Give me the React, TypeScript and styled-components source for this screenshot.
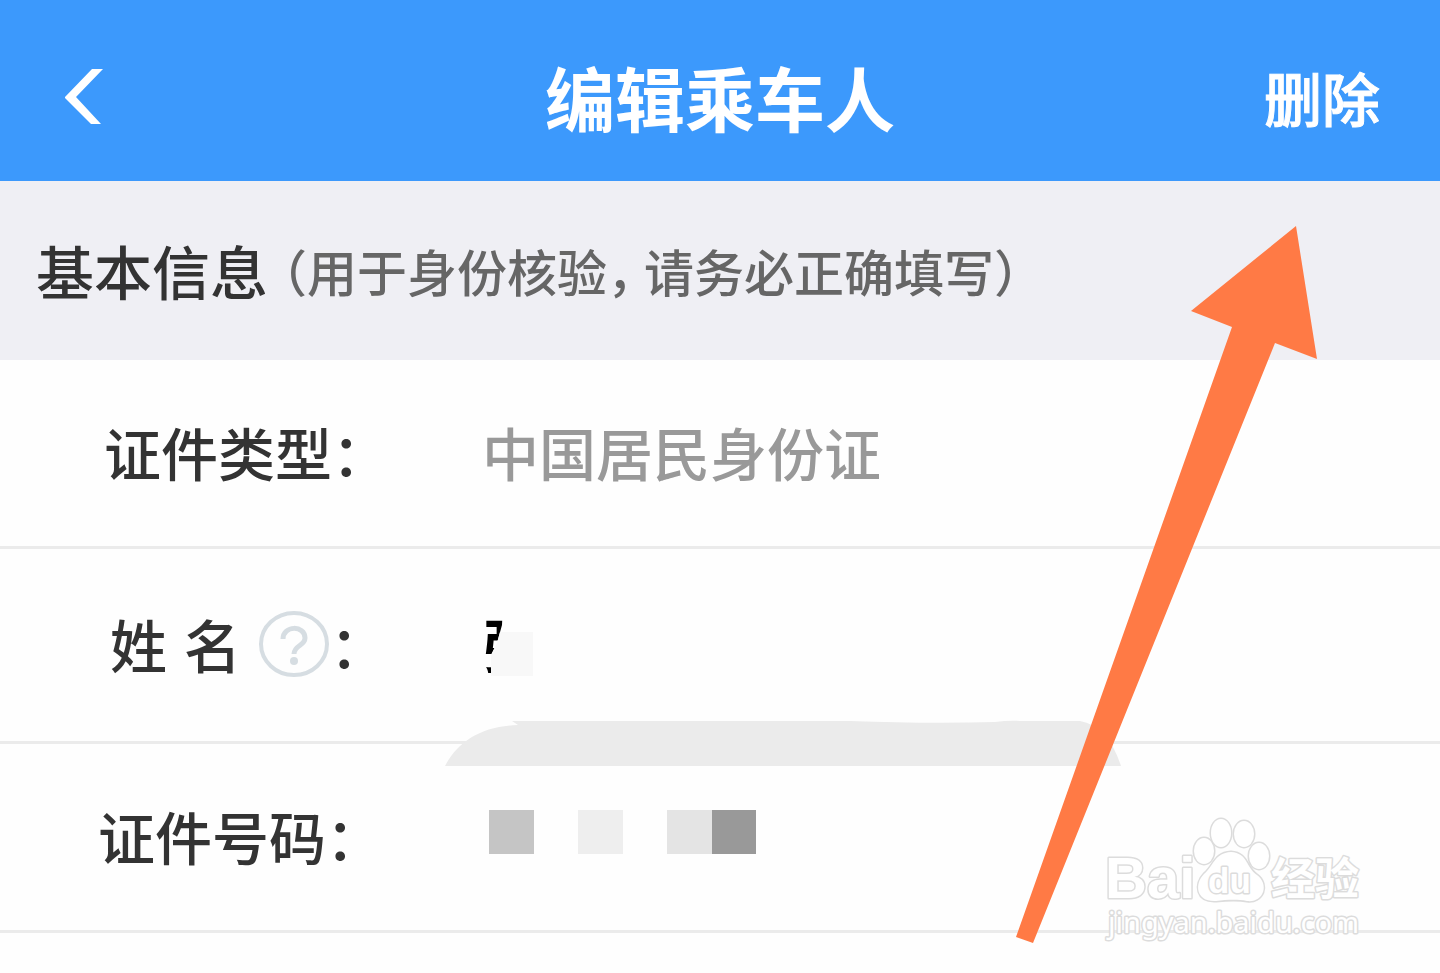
import React from "react";
import styled, { createGlobalStyle } from "styled-components";

const GlobalStyle = createGlobalStyle`
  * { box-sizing: border-box; }
  body {
    margin: 0;
    background: #fefefe;
    color: #333;
    font-family: "Noto Sans CJK SC", sans-serif;
    font-weight: 500;
  }
  button, input { font: inherit; color: inherit; border: 0; padding: 0; background: none; }
`;

const Page = styled.div`
  position: relative;
  min-height: 100vh;
  overflow: hidden;
`;

const TopBar = styled.header`
  display: grid;
  grid-template-columns: 1fr auto 1fr;
  align-items: center;
  height: 181px;
  padding: 12px 60px 0;
  background: #3c99fc;
  color: #fff;
`;

const Title = styled.h1`
  margin: 0;
  font-size: 70px;
  line-height: 80px;
  font-weight: 700;
`;

const BackButton = styled.button`
  display: flex;
  justify-self: start;
  padding: 0 4px;
`;

const DeleteButton = styled.button`
  justify-self: end;
  font-size: 58px;
  line-height: 80px;
  -webkit-text-stroke: 1px currentColor;
`;

const SectionHead = styled.div`
  display: flex;
  align-items: center;
  gap: 14px;
  height: 179px;
  padding: 0 36px 2px;
  background: #efeff4;
`;

const SectionTitle = styled.h2`
  margin: 0;
  font-size: 58px;
  line-height: 80px;
  font-weight: 500;
`;

const Hint = styled.p`
  display: flex;
  gap: 12px;
  margin: 0;
  font-size: 50px;
  line-height: 80px;
  color: #666;
  font-feature-settings: "halt";
`;

const Row = styled.div<{ $inset: number }>`
  display: grid;
  grid-template-columns: ${(p) => 482 - p.$inset}px 1fr;
  align-items: center;
  height: 195px;
  padding: 0 0 4px ${(p) => p.$inset}px;
  border-bottom: 3px solid #ebebeb;
  font-size: 57px;
  line-height: 80px;
  &:first-child, &:last-child { height: 189px; }
`;

const Label = styled.label`
  display: flex;
  align-items: center;
`;

const NameLabel = styled.div`
  display: flex;
  align-items: center;
`;

const SpacedLabel = styled(Label)`
  gap: 17px;
  margin-right: 17px;
`;

const HelpButton = styled.button`
  display: flex;
`;

const Value = styled.span`
  color: #999;
`;

const NameField = styled.div`
  position: relative;
  height: 80px;
`;

const NameInput = styled.input`
  display: block;
  width: 100%;
  height: 80px;
  color: #000;
  font-weight: 700;
  outline: none;
`;

const NameCover = styled.svg`
  position: absolute;
  left: 0;
  top: 0;
`;

const Mosaic = styled.div`
  display: grid;
  grid-template-columns: repeat(6, 1fr);
  width: 274px;
  padding: 0 0 6px 7px;
`;

const Tile = styled.i<{ $tone: string }>`
  height: 44px;
  background: ${(p) => p.$tone};
`;

const Overlay = styled.svg`
  position: absolute;
  left: 0;
  top: 0;
  pointer-events: none;
`;

const tones = ["#c5c5c5", "transparent", "#eee", "transparent", "#e4e4e4", "#999"];

export default function App() {
  return (
    <Page>
      <GlobalStyle />
      <TopBar>
        <BackButton aria-label="返回">
          <svg width="40" height="56" viewBox="0 0 40 56">
            <path d="M28 0H39L12 28L37 55H27L1 29V28Z" fill="#fff" />
          </svg>
        </BackButton>
        <Title>编辑乘车人</Title>
        <DeleteButton>删除</DeleteButton>
      </TopBar>
      <SectionHead>
        <SectionTitle>基本信息</SectionTitle>
        <Hint>
          <span>（用于身份核验，</span>
          <span>请务必正确填写）</span>
        </Hint>
      </SectionHead>
      <main>
        <Row $inset={104}>
          <Label as="span">证件类型：</Label>
          <Value>中国居民身份证</Value>
        </Row>
        <Row $inset={110}>
          <NameLabel>
            <SpacedLabel htmlFor="name">
              <span>姓</span>
              <span>名</span>
            </SpacedLabel>
            <HelpButton type="button" aria-label="姓名填写说明">
              <svg width="72" height="68" viewBox="0 0 72 68" fill="none" stroke="#d6dde2">
                <ellipse cx="36" cy="35" rx="33" ry="31" strokeWidth="4" />
                <path d="M25 30C25 16 47 16 47 29C47 37 36 36 36 45" strokeWidth="5" />
                <circle cx="36" cy="52" r="4" fill="#d6dde2" stroke="none" />
              </svg>
            </HelpButton>
            <Label as="span">：</Label>
          </NameLabel>
          <NameField>
            <NameInput id="name" defaultValue="张" />
            <NameCover width="60" height="80" viewBox="0 0 60 80">
              <path d="M21 0H60V80H9V52L15 40L20 22Z" fill="#fefefe" />
              <path d="M18 29H51V73H9V52L15 40Z" fill="#f8f8f8" />
            </NameCover>
          </NameField>
        </Row>
        <Row $inset={98}>
          <Label as="span">证件号码：</Label>
          <Mosaic aria-hidden="true">
            {tones.map((tone, i) => (
              <Tile key={i} $tone={tone} />
            ))}
          </Mosaic>
        </Row>
      </main>
      <Overlay width="1440" height="973" viewBox="0 0 1440 973" aria-hidden="true">
        <path
          d="M445 766C458 741 482 726 518 725L512 721H850Q930 724 995 722Q1010 720 1020 721H1080Q1108 726 1121 766Z"
          fill="#ebebeb"
        />
        <path d="M1296 226L1317 359L1275 343L1033 943L1016 937L1232 327L1191 311Z" fill="#ff7a45" />
        <g fill="#fff" stroke="#dcdcdc" strokeWidth="3" strokeLinejoin="round" paintOrder="stroke">
          <ellipse cx="1204" cy="851" rx="10" ry="13" />
          <ellipse cx="1221" cy="833" rx="10" ry="14" />
          <ellipse cx="1244" cy="834" rx="10" ry="13" />
          <ellipse cx="1259" cy="856" rx="10" ry="13" />
          <path d="M1231 852C1248 853 1246 868 1257 875C1270 885 1263 903 1247 901C1236 899 1226 900 1216 901C1196 902 1194 884 1204 874C1214 866 1214 853 1231 852Z" />
          <text x="1105" y="898" fontFamily="Liberation Sans" fontWeight="700" fontSize="58">Bai</text>
          <text x="1208" y="893" fontFamily="Liberation Sans" fontWeight="700" fontSize="35">du</text>
          <text x="1271" y="895" fontFamily="Noto Sans CJK SC" fontWeight="700" fontSize="44">经验</text>
          <text x="1108" y="933" fontFamily="Noto Sans" fontWeight="400" fontSize="29">jingyan.baidu.com</text>
        </g>
      </Overlay>
    </Page>
  );
}
